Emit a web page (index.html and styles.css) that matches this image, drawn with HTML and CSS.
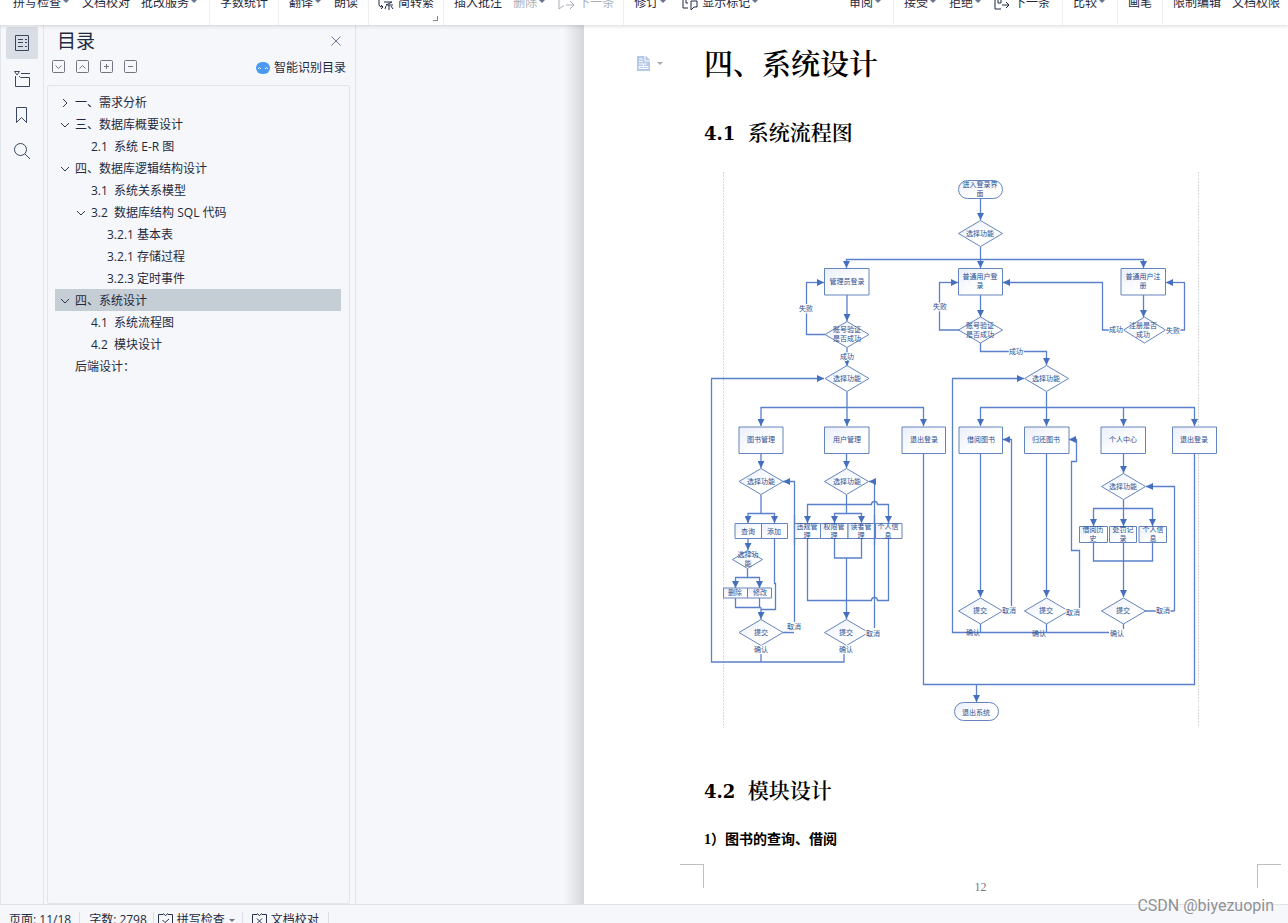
FILE: index.html
```html
<!DOCTYPE html>
<html lang="zh-CN">
<head>
<meta charset="utf-8">
<title>四、系统设计</title>
<link rel="stylesheet" href="styles.css">
</head>
<body>
<header class="ribbon">
  <div class="group group-first">
    <button class="tool">拼写检查<i class="caret"></i></button>
    <button class="tool">文档校对</button>
    <button class="tool">批改服务<i class="caret"></i></button>
  </div>
  <div class="group"><button class="tool">字数统计</button></div>
  <div class="group">
    <button class="tool">翻译<i class="caret"></i></button>
    <button class="tool">朗读</button>
  </div>
  <div class="group group-tight group-corner">
    <button class="tool"><svg class="tool-icon" viewBox="0 0 16 16"><path d="M1 5v5q0 2 4 2M3 10l2 2-2 2M5 4h10M6 7h8L8 10h7M11 10v5M8 11l-1 3M13 11l2 3"/></svg>简转繁</button>
    <i class="launcher"></i>
  </div>
  <div class="group group-tight">
    <button class="tool">插入批注</button>
    <button class="tool" disabled>删除<i class="caret"></i></button>
    <button class="tool" disabled><svg class="tool-icon" viewBox="0 0 16 16"><path d="M5 11l-4 3V1M5 11h1M8 10h7M12 6l4 4-4 4"/></svg>下一条</button>
  </div>
  <div class="group group-open">
    <button class="tool">修订<i class="caret"></i></button>
    <button class="tool"><svg class="tool-icon" viewBox="0 0 16 16"><path d="M6 13H1V3M4 5v3h2M9 6h6v6h-3l-3 3z"/></svg>显示标记<i class="caret"></i></button>
  </div>
  <div class="group"><button class="tool">审阅<i class="caret"></i></button></div>
  <div class="group group-loose">
    <button class="tool">接受<i class="caret"></i></button>
    <button class="tool">拒绝<i class="caret"></i></button>
    <button class="tool"><svg class="tool-icon" viewBox="0 0 16 16"><path d="M1 2v12h6M4 5v3h3V4M12 1v4M8 10h7M12 7l3 3-3 3"/></svg>下一条</button>
  </div>
  <div class="group"><button class="tool">比较<i class="caret"></i></button></div>
  <div class="group"><button class="tool">画笔</button></div>
  <div class="group group-last">
    <button class="tool">限制编辑</button>
    <button class="tool">文档权限</button>
  </div>
</header>

<div class="workspace">
  <nav class="rail" aria-label="侧栏">
    <button class="rail-button active" aria-label="目录"><svg viewBox="0 0 18 18"><path d="M2.500 1.500h13v15h-13zM5 5.500h5M12 5.500h2M5 8.500h5M12 8.500h2M5 12.500h5M12 12.500h2"/></svg></button>
    <button class="rail-button" aria-label="章节"><svg viewBox="0 0 18 18"><path d="M1.500 1.500h5L4 5zM8 3.500h9M2.500 6v10.500h14v-9h-9L6 6"/></svg></button>
    <button class="rail-button" aria-label="书签"><svg viewBox="0 0 18 18"><path d="M3.500 1.500h10v15l-5-5-5 5z"/></svg></button>
    <button class="rail-button" aria-label="查找"><svg viewBox="0 0 18 18"><circle cx="7.500" cy="7.500" r="6"/><path d="M12 12l5 5"/></svg></button>
  </nav>

  <aside class="outline">
    <div class="outline-head">
      <h2 class="outline-title">目录</h2>
      <button class="close" aria-label="关闭"><svg viewBox="0 0 10 10"><path d="M.5.5l9 9M9.500.5l-9 9"/></svg></button>
    </div>
    <div class="outline-tools">
      <button class="mini" aria-label="展开"><svg viewBox="0 0 14 14"><rect x=".5" y=".5" width="12" height="12" rx="1"/><path d="M3.500 5.500l3 3 3-3"/></svg></button>
      <button class="mini" aria-label="收起"><svg viewBox="0 0 14 14"><rect x=".5" y=".5" width="12" height="12" rx="1"/><path d="M3.500 8.500l3-3 3 3"/></svg></button>
      <button class="mini" aria-label="增加"><svg viewBox="0 0 14 14"><rect x=".5" y=".5" width="12" height="12" rx="1"/><path d="M4 6.500h5M6.500 4v5"/></svg></button>
      <button class="mini" aria-label="减少"><svg viewBox="0 0 14 14"><rect x=".5" y=".5" width="12" height="12" rx="1"/><path d="M4 6.500h5"/></svg></button>
      <button class="smart"><svg viewBox="0 0 14 12"><rect width="14" height="12" rx="6" fill="#4a9af5"/><path d="M2 7q1.500-3 3 0M9 7q1.500-3 3 0" fill="none" stroke="#fff"/></svg>智能识别目录</button>
    </div>
    <ul class="tree">
      <li><a class="node" href="#s1"><svg class="chevron" viewBox="0 0 10 10"><path d="M3 1l4 4-4 4"/></svg>一、需求分析</a></li>
      <li><a class="node" href="#s2"><svg class="chevron" viewBox="0 0 10 10"><path d="M1 3l4 4 4-4"/></svg>三、数据库概要设计</a></li>
      <li><a class="node level-2" href="#s21">2.1&nbsp; 系统 E-R 图</a></li>
      <li><a class="node" href="#s3"><svg class="chevron" viewBox="0 0 10 10"><path d="M1 3l4 4 4-4"/></svg>四、数据库逻辑结构设计</a></li>
      <li><a class="node level-2" href="#s31">3.1&nbsp; 系统关系模型</a></li>
      <li><a class="node level-2-open" href="#s32"><svg class="chevron" viewBox="0 0 10 10"><path d="M1 3l4 4 4-4"/></svg>3.2&nbsp; 数据库结构 SQL 代码</a></li>
      <li><a class="node level-3" href="#s321">3.2.1 基本表</a></li>
      <li><a class="node level-3" href="#s322">3.2.1 存储过程</a></li>
      <li><a class="node level-3" href="#s323">3.2.3 定时事件</a></li>
      <li><a class="node selected" href="#s4"><svg class="chevron" viewBox="0 0 10 10"><path d="M1 3l4 4 4-4"/></svg>四、系统设计</a></li>
      <li><a class="node level-2" href="#s41">4.1&nbsp; 系统流程图</a></li>
      <li><a class="node level-2" href="#s42">4.2&nbsp; 模块设计</a></li>
      <li><a class="node level-1" href="#s5">后端设计：</a></li>
    </ul>
  </aside>

  <div class="desk"></div>

  <main class="page">
    <button class="para-menu" aria-label="段落布局"><svg viewBox="0 0 26 16"><path d="M0 1h9l4 4v11H0z" fill="#b4c9e9"/><path d="M8 1v5h5M2 4h4M2 6.500h4M2 9h8M2 11.500h9v2H2zM6.500 9v5" fill="none" stroke="#fff"/><path d="M20 7h6l-3 3z" fill="#aaa"/></svg></button>
    <article class="content">
      <h1 class="chapter" id="s4">四、系统设计</h1>
      <h2 class="section" id="s41"><span class="num">4.1&nbsp; </span>系统流程图</h2>
      <svg class="chart" viewBox="704 168 520 562" role="img" aria-label="系统流程图">
        <defs>
          <marker id="arrow" viewBox="0 0 6 6" refX="6" refY="3" markerWidth="7" markerHeight="7" markerUnits="userSpaceOnUse" orient="auto"><path d="M0 0L6 3 0 6z" fill="#4570c0"/></marker>
          <linearGradient id="tint" x1="0" y1="0" x2="1" y2="1"><stop offset="0" stop-color="#e9eef9"/><stop offset=".6" stop-color="#fff"/></linearGradient>
        </defs>
        <path class="guide" d="M723.500 172V728M1198.500 172V728"/>
        <g class="wire">
          <path d="M806.500 282.500V334.500H825M939.500 282.500V330H959M1165 330H1184.500V282.500M1121 330H1102.500V282.500"/>
          <path d="M711.500 378.500V662H844V654M761 662V654M952.500 378.500V632.500H1109M980.500 624V632.500M1046.500 624V632.500M1123.500 624V629"/>
          <path d="M735.500 598V607.500H761M759.500 598V607.500M774.500 539V583.500H775.500V609.500H761M783 632.500H794"/>
          <path d="M834.500 539V558H861.500V539M807.500 539V600.500H871.500a3 3 0 0 1 6 0H888.500V539"/>
          <path d="M923.500 454V684.500H1194.500V454M1093.500 543V561H1152.500V543M1145 611H1174.500"/>
        </g>
        <g class="wire arrows">
          <path d="M980.500 199V220"/><path d="M980.500 247V268"/><path d="M980.500 259.500H846.500V268"/><path d="M980.500 259.500H1143.500V268"/>
          <path d="M847 295V321"/><path d="M980.500 295V317"/><path d="M1143.500 295V317"/>
          <path d="M806 282.500H824"/><path d="M939 282.500H958"/><path d="M1185 282.500H1166"/><path d="M1103 282.500H1003"/>
          <path d="M847 348V366"/><path d="M980.500 343V351.500H1046.500V365"/>
          <path d="M711 378.500H824"/><path d="M952 378.500H1024"/>
          <path d="M847 392V426"/><path d="M847 407.500H761V426"/><path d="M847 407.500H923.500V426"/>
          <path d="M1046.500 392V426"/><path d="M1046.500 407.500H980.500V426"/><path d="M1046.500 407.500H1123.500V426"/><path d="M1123.500 407.500H1194.500V426"/>
          <path d="M761 454V468"/><path d="M846.500 454V468"/><path d="M1123.500 454V473"/>
          <path d="M761 495V513.500H748V523"/><path d="M761 513.500H774.500V523"/><path d="M748 539V550"/>
          <path d="M747.500 569V577.500H735.500V588"/><path d="M747.500 577.500H759.500V588"/><path d="M761 607.500V619"/>
          <path d="M794.500 622V481.500H783"/><path d="M874.500 628V481.500H869"/>
          <path d="M846.500 495V513.500H834.500V523"/><path d="M846.500 513.500H861.500V523"/><path d="M846.500 504.500H807.500V523"/><path d="M846.500 504.500H871.500a3 3 0 0 1 6 0H888.500V523"/>
          <path d="M846.500 558V619"/><path d="M976.500 684.500V702"/>
          <path d="M980.500 454V597"/><path d="M1046.500 454V597"/><path d="M1011.500 606V439.500H1003"/><path d="M1079.500 608V550.500H1071.500V461.500H1076.500V439.500H1069"/>
          <path d="M1123.500 500V526"/><path d="M1123.500 508.500H1093.500V526"/><path d="M1123.500 508.500H1152.500V526"/><path d="M1123.500 543V597"/><path d="M1174.500 611V486.500H1146"/>
        </g>
        <g class="shape">
          <rect x="958.500" y="180.500" width="44" height="18" rx="9"/><rect x="954.500" y="702.500" width="44" height="18" rx="9"/>
          <path d="M824.500 268.500h44.500V295h-44.500z"/><path d="M958.500 268.500h44V295h-44z"/><path d="M1121 268.500h44.500V295H1121z"/>
          <path d="M739 427h44v26.500h-44z"/><path d="M824.500 427h44.500v26.500h-44.500z"/><path d="M902 427h43.500v26.500H902z"/><path d="M959 427h43.500v26.500H959z"/><path d="M1024.500 427h44.500v26.500h-44.500z"/><path d="M1101 427h44.500v26.500H1101z"/><path d="M1172.500 427h44v26.500h-44z"/>
          <path d="M735 523.500h26.500v15H735z"/><path d="M761.500 523.500h26v15h-26z"/><path d="M723.500 588h24v10h-24z"/><path d="M747.500 588h24v10h-24z"/>
          <path d="M794.500 523.500h26v15h-26z"/><path d="M820.500 523.500H848v15h-27.500z"/><path d="M848 523.500h27.500v15H848z"/><path d="M875.500 523.500H902v15h-26.500z"/>
          <path d="M1079.500 526.500h28v16h-28z"/><path d="M1109.500 526.500h27v16h-27z"/><path d="M1139 526.500h27.500v16H1139z"/>
          <path d="M958.500 233.500l22-13 22 13-22 13z"/><path d="M825 334.500l22-13 22 13-22 13z"/><path d="M958.500 330l22-13 22 13-22 13z"/><path d="M1123.500 330l21-13 21 13-21 13z"/>
          <path d="M825 378.500l22-13 22 13-22 13z"/><path d="M1024.500 378.500l22-13 22 13-22 13z"/><path d="M739 481.500l22-13 22 13-22 13z"/><path d="M824.500 481.500l22-13 22 13-22 13z"/><path d="M1101.500 486.500l22-13 22 13-22 13z"/>
          <path d="M732.500 559.500l15-9 15 9-15 9z"/><path d="M739 632.500l22-13 22 13-22 13z"/><path d="M824.500 632.500l22-13 22 13-22 13z"/>
          <path d="M958.500 611l22-13 22 13-22 13z"/><path d="M1024.500 611l22-13 22 13-22 13z"/><path d="M1101.500 611l22-13 22 13-22 13z"/>
        </g>
        <path class="wire" d="M794.500 515V545M874.500 515V545"/>
        <g class="label">
          <text x="980" y="187">进入登录界</text><text x="980" y="196">面</text><text x="980" y="236">选择功能</text>
          <text x="847" y="284">管理员登录</text><text x="980" y="279">普通用户登</text><text x="980" y="288">录</text><text x="1143" y="279">普通用户注</text><text x="1143" y="288">册</text>
          <text x="847" y="332">账号验证</text><text x="847" y="341">是否成功</text><text x="980" y="328">账号验证</text><text x="980" y="337">是否成功</text><text x="1143" y="328">注册是否</text><text x="1143" y="337">成功</text>
          <text x="847" y="381">选择功能</text><text x="1046" y="381">选择功能</text>
          <text x="761" y="442">图书管理</text><text x="847" y="442">用户管理</text><text x="924" y="442">退出登录</text><text x="981" y="442">借阅图书</text><text x="1046" y="442">归还图书</text><text x="1123" y="442">个人中心</text><text x="1194" y="442">退出登录</text>
          <text x="761" y="484">选择功能</text><text x="847" y="484">选择功能</text><text x="1123" y="489">选择功能</text>
          <text x="748" y="534">查询</text><text x="774" y="534">添加</text><text x="748" y="557">选择功</text><text x="748" y="566">能</text><text x="735" y="595">删除</text><text x="760" y="595">修改</text>
          <text x="807" y="529">违规管</text><text x="807" y="538">理</text><text x="834" y="529">权限管</text><text x="834" y="538">理</text><text x="861" y="529">读者管</text><text x="861" y="538">理</text><text x="888" y="529">个人信</text><text x="888" y="538">息</text>
          <text x="1093" y="532">借阅历</text><text x="1093" y="541">史</text><text x="1123" y="532">处罚记</text><text x="1123" y="541">录</text><text x="1153" y="532">个人信</text><text x="1153" y="541">息</text>
          <text x="761" y="635">提交</text><text x="846" y="635">提交</text><text x="980" y="613">提交</text><text x="1046" y="613">提交</text><text x="1123" y="613">提交</text><text x="976" y="715">退出系统</text>
        </g>
        <g class="label tag">
          <text x="806" y="311">失败</text><text x="940" y="309">失败</text><text x="1173" y="333">失败</text><text x="1116" y="332">成功</text><text x="847" y="359">成功</text><text x="1016" y="354">成功</text>
          <text x="761" y="652">确认</text><text x="846" y="652">确认</text><text x="794" y="629">取消</text><text x="873" y="636">取消</text>
          <text x="1009" y="613">取消</text><text x="1073" y="615">取消</text><text x="1163" y="613">取消</text><text x="1117" y="636">确认</text>
        </g>
        <g class="label">
          <text x="973" y="635">确认</text><text x="1039" y="636">确认</text>
        </g>
      </svg>
      <h2 class="section section-next" id="s42"><span class="num">4.2&nbsp; </span>模块设计</h2>
      <h3 class="item">1）图书的查询、借阅</h3>
    </article>
    <footer class="page-foot">
      <i class="corner corner-left"></i>
      <span class="page-number">12</span>
      <i class="corner corner-right"></i>
    </footer>
  </main>
</div>

<footer class="status">
  <span class="cell cell-first">页面: 11/18</span>
  <span class="cell">字数: 2798</span>
  <button class="cell"><svg viewBox="0 0 15 14"><path d="M5 1.500H.5v12h14v-12H10M5 .5l2.500 2L10 .5M4.500 7l2.500 2.500L11 6"/></svg>拼写检查<i class="caret"></i></button>
  <button class="cell"><svg viewBox="0 0 15 14"><path d="M5 1.500H.5v12h14v-12H10M5 .5l2.500 2L10 .5M5 5.500l5 5M10 5.500l-5 5"/></svg>文档校对</button>
</footer>
<div class="watermark">CSDN @biyezuopin</div>
</body>
</html>
```

FILE: styles.css
```css
* { box-sizing: border-box; }

body {
  margin: 0;
  height: 100vh;
  display: flex;
  flex-direction: column;
  overflow: hidden;
  background: #f5f7fa;
  color: #1f2a41;
  font: 12px/16px "Open Sans", "Noto Sans CJK SC", sans-serif;
}

button {
  border: 0;
  padding: 0;
  background: none;
  color: inherit;
  font: inherit;
}

svg { flex: none; }

.caret {
  border: 3px solid transparent;
  border-top-color: #69748f;
  border-bottom: 0;
}

/* Ribbon */
.ribbon {
  position: relative;
  z-index: 2;
  flex: none;
  height: 25px;
  display: flex;
  background: #fff;
  box-shadow: 0 1px 4px rgba(0, 0, 0, .16);
  clip-path: inset(0 0 -6px 0);
}

.group {
  flex: none;
  display: flex;
  align-items: flex-end;
  gap: 11px;
  padding: 0 10px 14px;
  border-right: 1px solid #eceef1;
}

.group-first { padding-left: 13px; }
.group-tight { padding-right: 9px; }
.group-corner { position: relative; padding-left: 9px; }
.group-open { flex: 1 0 auto; gap: 14px; border: 0; }
.group-loose { padding-right: 12px; }
.group-last { padding-right: 8px; border: 0; }

.tool {
  display: flex;
  align-items: center;
  white-space: nowrap;
}

.tool:disabled { color: #a9adb6; }
.tool .caret { margin: 0 2px 3px; }

.tool-icon {
  width: 16px;
  height: 16px;
  margin-right: 4px;
  fill: none;
  stroke: currentColor;
}

.launcher {
  position: absolute;
  right: 5px;
  bottom: 4px;
  width: 5px;
  height: 5px;
  border: solid #7c869c;
  border-width: 0 1px 1px 0;
}

/* Workspace */
.workspace {
  flex: 1;
  min-height: 0;
  display: flex;
  border-bottom: 1px solid #dfe2e8;
}

.rail {
  flex: none;
  width: 44px;
  display: flex;
  flex-direction: column;
  gap: 4px;
  padding: 2px 5px;
  border: solid #e1e4ea;
  border-width: 0 1px;
}

.rail-button {
  height: 32px;
  display: grid;
  place-items: center;
  border-radius: 2px;
}

.rail-button.active { background: #d9dde5; }

.rail-button svg {
  width: 18px;
  height: 18px;
  fill: none;
  stroke: #3b465e;
}

.outline {
  flex: none;
  width: 312px;
  display: flex;
  flex-direction: column;
  padding: 0 5px 0 3px;
  border-right: 1px solid #dfe2e9;
}

.outline-head {
  height: 32px;
  display: flex;
  align-items: center;
  justify-content: space-between;
  padding: 0 9px 1px 10px;
}

.outline-title {
  margin: 0;
  font-size: 19px;
  line-height: 26px;
  font-weight: 400;
}

.close { height: 10px; }
.close svg { display: block; width: 10px; fill: none; stroke: #6b7893; }

.outline-tools {
  height: 20px;
  margin-bottom: 8px;
  display: flex;
  align-items: center;
  gap: 10px;
  padding: 0 4px 0 5px;
}

.mini { height: 14px; }
.mini svg { display: block; width: 14px; fill: none; stroke: #70757f; }

.smart {
  margin-left: auto;
  padding-top: 1px;
  display: flex;
  align-items: center;
  gap: 4px;
}

.smart svg { width: 14px; height: 12px; }

.tree {
  flex: 1;
  margin: 0;
  padding: 5px 8px 5px 7px;
  list-style: none;
  border: 1px solid #e1e4ea;
  border-radius: 2px;
}

.node {
  height: 22px;
  display: flex;
  align-items: center;
  padding: 2px 0 0 5px;
  color: inherit;
  text-decoration: none;
  white-space: pre;
}

.node.selected { background: #c5cdd5; }
.level-1 { padding-left: 20px; }
.level-2 { padding-left: 36px; }
.level-2-open { padding-left: 21px; }
.level-3 { padding-left: 52px; }

.chevron {
  width: 10px;
  height: 10px;
  margin-right: 5px;
  fill: none;
  stroke: #2c374e;
}

.desk {
  flex: none;
  width: 228px;
  background: linear-gradient(to left, #d3d6da, #f5f7fa 20px);
}

/* Document page */
.page {
  position: relative;
  flex: 1;
  padding: 20px 7px 0 96px;
  background: #fff;
  color: #000;
}

.para-menu {
  position: absolute;
  left: 53px;
  top: 30px;
}

.para-menu svg { display: block; width: 26px; height: 16px; }

.content {
  padding-left: 24px;
  font-family: "Liberation Serif", "Noto Serif CJK SC", "Noto Sans CJK SC", serif;
}

.chapter {
  margin: 0;
  font-size: 29px;
  line-height: 40px;
  font-weight: 600;
}

.section {
  margin: 33px 0 19px;
  font-size: 21px;
  line-height: 30px;
  font-weight: 600;
}

.section-next { margin: 46px 0 23px; }

.num {
  font: bold 18px/30px "DejaVu Serif", serif;
}

.item {
  margin: 0 0 14px;
  font: bold 14px/20px "Liberation Serif", "Noto Sans CJK SC", sans-serif;
}

.chart {
  display: block;
  width: 520px;
  max-width: 100%;
}

.guide { stroke: #d8d8dc; stroke-dasharray: 2 1; }
.wire { fill: none; stroke: #5b80cb; stroke-width: 1.3; }
.arrows path { marker-end: url(#arrow); }
.shape { fill: url(#tint); stroke: #6484bd; }

.label {
  font: 7px "Noto Sans CJK SC", sans-serif;
  fill: #294f91;
  text-anchor: middle;
}

.tag {
  paint-order: stroke;
  stroke: #fff;
  stroke-width: 2px;
}

.page-foot {
  display: flex;
  justify-content: space-between;
}

.corner { width: 24px; height: 24px; border: 0 solid #bfbfbf; }
.corner-left { border-width: 1px 1px 0 0; }
.corner-right { border-width: 1px 0 0 1px; }

.page-number {
  padding-top: 15px;
  color: #777;
  font-family: "Liberation Serif", serif;
}

/* Status bar */
.status {
  flex: none;
  height: 18px;
  display: flex;
  align-items: flex-start;
  padding-top: 7px;
  overflow: hidden;
}

.cell {
  display: flex;
  align-items: center;
  gap: 4px;
  padding: 0 6px 0 9px;
  border-right: 1px solid #d9dde4;
  white-space: nowrap;
}

.cell-first { padding-right: 8px; }
button.cell { padding: 0 7px 0 4px; }
button.cell:last-child { padding: 0 9px; }

.cell svg {
  width: 15px;
  height: 14px;
  fill: none;
  stroke: #26324a;
}

.watermark {
  position: absolute;
  z-index: 3;
  right: 14px;
  bottom: 7px;
  color: #8f9195;
  font: 16px/20px Roboto, "Liberation Sans", sans-serif;
  text-shadow: 0 0 2px #fff;
}
```
